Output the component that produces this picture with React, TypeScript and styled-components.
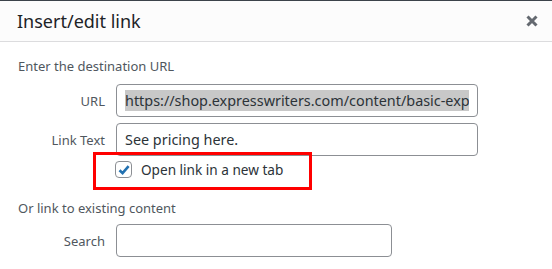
import styled, { createGlobalStyle } from "styled-components";

const GlobalStyle = createGlobalStyle`
  html, body {
    margin: 0;
    padding: 0;
    background: #fff;
  }
  body {
    font-family: "Noto Sans", "Open Sans", sans-serif;
  }
`;

const Modal = styled.div`
  width: 552px;
  height: 269px;
  border-top: 1px solid #3c434a;
  box-sizing: border-box;
  background: #fff;
  overflow: hidden;
`;

const Header = styled.div`
  height: 40px;
  background: #fcfcfc;
  border-bottom: 1px solid #dcdcde;
  display: flex;
  align-items: center;
  justify-content: space-between;
  padding: 0 14px 0 17px;
`;

const Title = styled.h1`
  margin: 0;
  font-size: 18px;
  font-weight: 400;
  color: #1d2327;
`;

const CloseButton = styled.button`
  border: none;
  background: none;
  padding: 0;
  width: 12px;
  height: 12px;
  display: flex;
  cursor: pointer;
`;

const Body = styled.div`
  padding: 14px 0 0 18px;
`;

const SectionTitle = styled.p`
  margin: 0;
  font-size: 13px;
  line-height: 20px;
  color: #50575e;
`;

const Fields = styled.div<{ $top: number }>`
  display: grid;
  grid-template-columns: 87px auto;
  column-gap: 11px;
  row-gap: 6px;
  margin-top: ${(p) => p.$top}px;
`;

const Label = styled.label`
  font-size: 13px;
  color: #50575e;
  text-align: right;
  align-self: center;
`;

const Field = styled.div<{ $width: number }>`
  width: ${(p) => p.$width}px;
  height: 33px;
  box-sizing: border-box;
  border: 1px solid #8c8f94;
  border-radius: 4px;
  padding: 0 8px;
  display: flex;
  align-items: center;
  overflow: hidden;
  font-size: 14.4px;
  color: #2c3338;
  white-space: nowrap;
  background: #fff;
`;

const Clip = styled.div`
  overflow: hidden;
  width: 100%;
`;

const Selected = styled.span`
  background: #c8c8c8;
  line-height: 21px;
  display: inline-block;
`;

/* red highlight box drawn over the bottom edge of the link text field */
const CheckRow = styled.div`
  position: relative;
  margin: -4px 0 0 75px;
  width: 219px;
  height: 38px;
  border: 3px solid #ff0000;
  display: flex;
  align-items: center;
  gap: 9px;
  padding: 0 0 3px 19px;
  box-sizing: border-box;
`;

const CheckBox = styled.span`
  width: 17px;
  height: 17px;
  box-sizing: border-box;
  border: 1px solid #8c8f94;
  border-radius: 4px;
  display: flex;
  align-items: center;
  justify-content: center;
  background: #fff;
`;

const CheckLabel = styled.span`
  font-size: 13.6px;
  color: #2c3338;
`;

const SubSection = styled(SectionTitle)`
  margin-top: 8px;
`;

export default function App() {
  return (
    <>
      <GlobalStyle />
      <Modal>
        <Header>
          <Title>Insert/edit link</Title>
          <CloseButton aria-label="Close">
            <svg width="12" height="12" viewBox="0 0 12 12">
              <path d="M1.5 1.5 L10.5 10.5 M10.5 1.5 L1.5 10.5" stroke="#646970" strokeWidth="3" />
            </svg>
          </CloseButton>
        </Header>
        <Body>
          <SectionTitle>Enter the destination URL</SectionTitle>
          <Fields $top={8}>
            <Label>URL</Label>
            <Field $width={362}>
              <Clip>
                <Selected>https://shop.expresswriters.com/content/basic-express-content/</Selected>
              </Clip>
            </Field>
            <Label>Link Text</Label>
            <Field $width={362}>See pricing here.</Field>
          </Fields>
          <CheckRow>
            <CheckBox>
              <svg width="14" height="14" viewBox="0 0 14 14">
                <path d="M2.5 7.2 L5.6 10.2 L11.6 3.2" fill="none" stroke="#2271b1" strokeWidth="2.6" />
              </svg>
            </CheckBox>
            <CheckLabel>Open link in a new tab</CheckLabel>
          </CheckRow>
          <SubSection>Or link to existing content</SubSection>
          <Fields $top={6}>
            <Label>Search</Label>
            <Field $width={276} />
          </Fields>
        </Body>
      </Modal>
    </>
  );
}
